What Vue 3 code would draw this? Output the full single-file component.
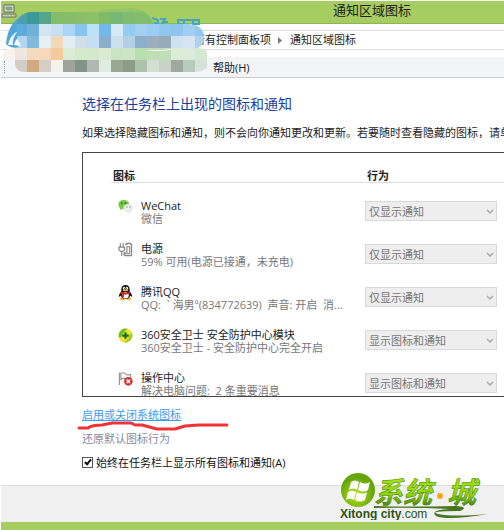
<template>
    <div class="window">
        <header class="top">
            <div class="title-bar">
                <svg class="window-icon" viewBox="0 0 16 16">
                    <path d="M3 1h10v7H3z" fill="#eef2e6" stroke="#59634b" />
                    <path d="M5 3h6v3H5z" fill="#8fa294" stroke="#7f9a8c" />
                    <path d="M1 10h14v3H1z" fill="#d6dccb" stroke="#69725c" />
                    <path d="M4 10v2M7 10v2M10 10v2M13 10v2" stroke="#8b937f" />
                </svg>
                <h1>通知区域图标</h1>
            </div>
            <nav class="address">
                <a href="#">所有控制面板项</a>
                <svg class="crumb" viewBox="0 0 5 7"><path d="M0 0l4 3.5L0 7z" fill="#777" /></svg>
                <a href="#">通知区域图标</a>
            </nav>
            <div class="menu-bar">
                <span class="grip"></span>
                <button type="button" class="menu-item">帮助(H)</button>
            </div>
            <svg class="mosaic" viewBox="0 0 214 76" aria-hidden="true">
                <defs>
                    <clipPath id="blob">
                        <path d="M17 24Q20 12 32 12H99Q105 8 128 9Q150 10 152 24H190Q204 26 204 37Q204 45 198 48Q210 49 210 60Q209 72 194 72H24Q15 72 14 60Q3 60 3 54Q3 48 15 48L21 46Q15 36 17 24z" />
                    </clipPath>
                </defs>
                <path d="M6 44Q8 18 31 12L50 14L24 38Q18 43 19 48Q9 48 6 44z" fill="#4fa6d7" />
                <path d="M8 45Q10 35 18 31Q12 38 13 45zM14 45Q15 39 20 37V46z" fill="#f2f9fd" />
                <path d="M152 18l6 2v3h-4M160 19h5l-2 3h5M162 24l4-3M178 25v-5h21v5M184 20v4h-6M193 20v4h7" fill="none" stroke="#43a8bd" stroke-width="2" />
                <path d="M112 12Q118 8 132 8Q148 9 154 22L150 24H110z" fill="#93c56b" />
                <g clip-path="url(#blob)">
                    <template v-for="(row, y) in mosaic" :key="y">
                        <rect
                            v-for="(color, x) in row"
                            :key="x"
                            :x="3 + x * 12"
                            :y="y * 12"
                            width="12"
                            height="12"
                            :fill="color"
                            shape-rendering="crispEdges"
                        />
                    </template>
                </g>
                <path d="M145 50Q158 51 172 49L170 50Q156 52 145 50z" fill="#fff" />
            </svg>
        </header>

        <main class="content">
            <h2>选择在任务栏上出现的图标和通知</h2>
            <p class="hint">如果选择隐藏图标和通知，则不会向你通知更改和更新。若要随时查看隐藏的图标，请单击</p>

            <div class="list">
                <table>
                    <thead>
                        <tr>
                            <th>图标</th>
                            <th class="behavior">行为</th>
                        </tr>
                    </thead>
                    <tbody>
                        <tr v-for="item in items" :key="item.id">
                            <td>
                                <div class="entry">
                                    <svg v-if="item.id === 'wechat'" class="icon" viewBox="0 0 16 16">
                                        <path d="M6 1C2.500 1 .5 3.200 .5 6c0 1.700.9 3 2 4L2 12l2.500-1.300C9 11.500 12 9 12 6S9.500 1 6 1z" fill="#75cb43" />
                                        <circle cx="4" cy="4.500" r="1" fill="#32741b" />
                                        <circle cx="8" cy="4.500" r="1" fill="#32741b" />
                                        <path d="M11 5.500c-3 0-5 1.800-5 4s2 4 5 4l2 .8v-1.300c1.400-.7 2.300-2 2.300-3.500 0-2.200-2-4-4.300-4z" fill="#eee" stroke="#d6d6d6" stroke-width=".6" />
                                        <circle cx="9.500" cy="8.500" r=".8" fill="#888" />
                                        <circle cx="12.700" cy="8.500" r=".8" fill="#888" />
                                    </svg>
                                    <svg v-else-if="item.id === 'power'" class="icon" viewBox="0 0 16 16" fill="none" stroke="#858585" stroke-width="1.200">
                                        <path d="M2.500 1v4M5.500 1v4M1 5.500h6v3L5 10H3L1 8.500zM4 10v5" />
                                        <path d="M6.500 14.500V11M7.500 2.500h2v-1h4v1h1v12h-7v-4M9.500 5v7.500h3V5z" />
                                    </svg>
                                    <svg v-else-if="item.id === 'qq'" class="icon" viewBox="0 0 16 16">
                                        <ellipse cx="5" cy="14.500" rx="3" ry="1.400" fill="#f4a51d" />
                                        <ellipse cx="11" cy="14.500" rx="3" ry="1.400" fill="#f4a51d" />
                                        <path d="M8 0C5 0 3.500 2 3.500 5v2C2 8.500.8 10.500 1 12.500c.8.300 1.500-.5 2-1.200C3.500 13.500 5.500 15 8 15s4.500-1.500 5-3.700c.5.700 1.200 1.500 2 1.200.2-2-1-4-2.500-5.500V5c0-3-1.500-5-4.500-5z" fill="#171717" />
                                        <ellipse cx="8" cy="11" rx="3.500" ry="3.300" fill="#fff" />
                                        <ellipse cx="6.500" cy="3.500" rx="1.200" ry="1.600" fill="#fff" />
                                        <ellipse cx="9.500" cy="3.500" rx="1.200" ry="1.600" fill="#fff" />
                                        <circle cx="7" cy="3.700" r=".5" />
                                        <circle cx="9" cy="3.700" r=".5" />
                                        <ellipse cx="8" cy="5.700" rx="3" ry="1" fill="#f7b51b" />
                                        <path d="M3 7Q8 9.500 13 7v2Q9.500 10.500 6.500 10v3H4.500V9.500L3 9z" fill="#e22028" />
                                    </svg>
                                    <svg v-else-if="item.id === 'safe'" class="icon" viewBox="0 0 16 16">
                                        <circle cx="8" cy="8" r="7.500" fill="#f6df2b" />
                                        <path d="M10 .8A7.500 7.500 0 0 0 1 10Q3 11 4 8T10 .8z" fill="#68bd2c" />
                                        <path d="M6 15.200A7.500 7.500 0 0 0 15 6Q13 5 12 9T6 15.200z" fill="#9ccc25" />
                                        <path d="M8 4.500v7M4.500 8h7" stroke="#087527" stroke-width="2.400" />
                                    </svg>
                                    <svg v-else class="icon" viewBox="0 0 16 16">
                                        <path d="M1.500 15V1.500M3 2.500Q6 1 8 3t5.500.5V9Q9 10 7.500 8.500T3 9V2" fill="#f8f8f8" stroke="#959595" stroke-width="1.200" />
                                        <circle cx="11" cy="11" r="4.600" fill="#db3032" />
                                        <path d="M9.200 9.200l3.600 3.600M12.800 9.200l-3.600 3.600" stroke="#fff" stroke-width="1.600" />
                                    </svg>
                                    <label :for="item.id">
                                        <span class="name">{{ item.name }}</span>
                                        <span class="desc">{{ item.desc }}</span>
                                    </label>
                                </div>
                            </td>
                            <td>
                                <div class="picker">
                                    <select :id="item.id" v-model="item.mode" disabled>
                                        <option v-for="mode in modes" :key="mode">{{ mode }}</option>
                                    </select>
                                    <svg class="arrow" viewBox="0 0 8 6"><path d="M1 1l3 3 3-3" fill="none" stroke="#aaa" stroke-width="1.500" /></svg>
                                </div>
                            </td>
                        </tr>
                    </tbody>
                </table>
            </div>

            <div class="links">
                <a href="#" class="system-link">启用或关闭系统图标</a>
                <svg class="scribble" viewBox="0 0 154 12">
                    <path d="M2 7H11Q15 4 25 4L35 2H54L58 4H65L80 8H98L108 5L122 4H150" fill="none" stroke="#ef3438" stroke-width="3" stroke-linecap="round" stroke-linejoin="round" />
                </svg>
                <a href="#" class="restore-link">还原默认图标行为</a>
            </div>
            <label class="always">
                <input v-model="showAll" type="checkbox" />
                <span>始终在任务栏上显示所有图标和通知(A)</span>
            </label>
        </main>

        <footer class="bottom">
            <svg class="brand" viewBox="0 0 152 48">
                <defs>
                    <radialGradient id="orb" cx="45%" cy="65%">
                        <stop offset="0" stop-color="#b9e51c" />
                        <stop offset="1" stop-color="#65a70b" />
                    </radialGradient>
                    <linearGradient id="leaf" x1="0" y1="0" x2="0" y2="1">
                        <stop offset="0" stop-color="#a9ec08" />
                        <stop offset=".6" stop-color="#8fd60a" />
                        <stop offset="1" stop-color="#285f12" />
                    </linearGradient>
                </defs>
                <circle cx="19" cy="18" r="17" fill="url(#orb)" />
                <path d="M12 10Q16 7 20 10L18 18Q14 15 10 18zM21 10Q26 13 31 10L29 18Q24 21 19 18zM9 20Q13 17 17 20L15 28Q11 25 7 28zM18 20Q23 23 28 20L26 28Q21 31 16 28z" fill="#fff" />
                <text class="brand-name" x="35" y="31">系统</text>
                <circle cx="101" cy="24" r="3" fill="#f9a514" />
                <text class="brand-name" x="108" y="31">城</text>
                <path d="M35 34Q70 35 116 34Q131 35 121 39Q88 39 99 42Q115 45 149 42Q109 49 97 44Q90 38 111 37Q75 35 35 36z" fill="#47751e" />
                <text class="brand-site" x="1" y="46">Xitong city<tspan class="brand-com">.com</tspan></text>
            </svg>
        </footer>
    </div>
</template>

<script setup>
import { ref, reactive } from 'vue';

const showAll = ref(true);
const modes = ['仅显示通知', '显示图标和通知'];

const items = reactive([
    { id: 'wechat', name: 'WeChat', desc: '微信', mode: modes[0] },
    { id: 'power', name: '电源', desc: '59% 可用(电源已接通，未充电)', mode: modes[0] },
    { id: 'qq', name: '腾讯QQ', desc: 'QQ:  ` 海男º(834772639)  声音: 开启  消...', mode: modes[0] },
    { id: 'safe', name: '360安全卫士 安全防护中心模块', desc: '360安全卫士 - 安全防护中心完全开启', mode: modes[1] },
    { id: 'action', name: '操作中心', desc: '解决电脑问题:  2 条重要消息', mode: modes[1] },
]);

// tiles of the pixelated patch, top to bottom
const mosaic = [
    Array(17).fill('#93c56b'),
    ['#499fc9', '#4ba0ac', '#3d9997', '#54a58c', '#83bd69', '#86bd69', '#8abe68', '#8ac169', '#80bb69', '#79b774', '#80bc6f', '#83be6e', '#83bd70', '#a3cc6c', '#a3cc6c', '#a3cc6c', '#a3cc6c'],
    ['#4ca5d5', '#5eacd9', '#70b1d9', '#d4e5f1', '#c5dff3', '#aad5f6', '#86c4f2', '#bddff7', '#72b8ea', '#d4eaf7', '#94cbf3', '#a4cfef', '#9bccf3', '#90c7f1', '#8fc4ef', '#a1cff4', '#94c9ef'],
    ['#4ca5d5', '#b0d5ed', '#82b9dd', '#e6eff3', '#f3d8b8', '#e4edf2', '#d0deea', '#c3def5', '#8aaecb', '#cbdfed', '#b4cfe4', '#8dafc9', '#9aaebd', '#97abba', '#cee2f0', '#d4e5f1', '#b1d0ea'],
    ['#f8f1ec', '#ece6df', '#f5dac0', '#f6d8bc', '#f5cb9e', '#dbedd4', '#d4eacb', '#d4e9cb', '#d9ecd3', '#cae3c2', '#cbe5c6', '#b9dfb0', '#bfdeb6', '#c0dfb9', '#dcecd9', '#dbebd9', '#d5e9d2'],
    ['#f0f0f0', '#d1cec9', '#d2aa7e', '#d4cec7', '#f4f2ed', '#9ea49c', '#849287', '#b1b8b1', '#e0ebe1', '#96a991', '#8d9e88', '#aec1aa', '#d4ded3', '#c8d2c7', '#a0a9a0', '#b6cbb9', '#d8e1d9'],
];
</script>

<style>
body {
    background: #fff;
}
</style>

<style scoped>
.window {
    box-sizing: border-box;
    height: 100vh;
    padding: 1px 0 0 1px;
    display: flex;
    flex-direction: column;
    overflow: hidden;
    background: #fff;
    color: #222;
    font: 11px/13px "Open Sans", "Noto Sans CJK SC", sans-serif;
}

.top {
    position: relative;
    flex: none;
}

.title-bar {
    display: flex;
    align-items: flex-start;
    height: 22px;
    background: #a5cd61;
    border-bottom: 1px solid #8fb452;
}

.window-icon {
    width: 16px;
    height: 16px;
    margin-top: 3px;
}

h1 {
    margin: 0 0 0 316px;
    font-size: 13px;
    line-height: 19px;
    font-weight: 400;
    white-space: nowrap;
}

.address {
    display: flex;
    align-items: center;
    height: 18px;
    margin-top: 6px;
    padding-left: 193px;
    border-top: 1px solid #ddd;
    border-bottom: 1px solid #ddd;
    line-height: 18px;
    white-space: nowrap;
}

.address a {
    color: #222;
    text-decoration: none;
}

.crumb {
    width: 5px;
    height: 7px;
    margin: 0 7px;
}

.menu-bar {
    display: flex;
    align-items: center;
    height: 20px;
    margin-top: 7px;
    background: #f3f4f6;
    border-bottom: 1px solid #ccc;
}

.grip {
    width: 2px;
    margin-left: 3px;
    height: 12px;
    border-left: 1px dotted #999;
}

.menu-item {
    margin-left: 206px;
    padding: 0;
    border: 0;
    background: none;
    color: #222;
    font: inherit;
}

/* sits over the title, address and menu rows */
.mosaic {
    position: absolute;
    left: -1px;
    top: -1px;
    width: 214px;
    height: 76px;
}

.content {
    flex: 1;
    min-height: 0;
    display: flex;
    flex-direction: column;
    padding: 17px 0 16px 81px;
}

h2 {
    margin: 0;
    color: #1a419f;
    font-size: 14px;
    line-height: 18px;
    font-weight: 400;
    white-space: nowrap;
}

.hint {
    margin: 13px 0;
    white-space: nowrap;
    overflow: hidden;
}

.list {
    flex: 1;
    min-height: 0;
    overflow: hidden;
    padding: 16px 0 0 28px;
    border: 1px solid #444;
    border-right: 0;
}

table {
    width: 100%;
    table-layout: fixed;
    border-collapse: collapse;
}

th {
    padding: 0 2px;
    border-bottom: 1px solid #ddd;
    font-weight: 700;
    text-align: left;
}

.behavior {
    width: 135px;
}

td {
    height: 27px;
    padding: 16px 0 0;
    vertical-align: top;
}

.entry {
    display: flex;
    gap: 8px;
    padding-left: 7px;
    white-space: pre;
}

.icon {
    flex: none;
    width: 15px;
    height: 15px;
}

.name,
.desc {
    display: block;
}

.desc {
    color: #777;
}

.picker {
    position: relative;
    height: 20px;
    margin: 2px 7px 0 0;
}

select {
    appearance: none;
    display: block;
    box-sizing: border-box;
    width: 100%;
    height: 20px;
    padding: 0 3px;
    border: 1px solid #d9d9d9;
    border-radius: 0;
    background: #eee;
    color: #777;
    opacity: 1;
    font: inherit;
}

.arrow {
    position: absolute;
    right: 3px;
    top: 8px;
    width: 8px;
    height: 6px;
    pointer-events: none;
}

.links {
    position: relative;
    display: flex;
    flex-direction: column;
    align-items: flex-start;
    gap: 11px;
    margin-top: 11px;
}

.system-link {
    color: #3b9bef;
}

.restore-link {
    color: #858a9c;
    text-decoration: none;
}

.scribble {
    position: absolute;
    left: -5px;
    top: 13px;
    width: 154px;
    height: 12px;
}

.always {
    display: flex;
    align-items: center;
    gap: 3px;
    margin-top: 11px;
    color: #111;
}

.always input {
    appearance: none;
    position: relative;
    width: 11px;
    height: 11px;
    margin: 0;
    border: 1px solid #555;
    background: #fff;
}

.always input:checked::after {
    content: "";
    position: absolute;
    left: 3px;
    top: 0;
    width: 2px;
    height: 5px;
    border: solid #111;
    border-width: 0 2px 2px 0;
    transform: rotate(40deg);
}

.bottom {
    position: relative;
    flex: none;
    height: 36px;
    background: #f0f0f0;
    border-top: 1px solid #ddd;
    border-bottom: 8px solid #a5cd61;
}

/* watermark over the footer corner */
.brand {
    position: absolute;
    right: 13px;
    bottom: 2px;
    width: 152px;
    height: 48px;
}

.brand-name {
    fill: url(#leaf);
    stroke: #477c10;
    stroke-width: 0.5px;
    font: italic 700 29px "Noto Sans CJK SC", sans-serif;
}

.brand-site {
    fill: #2d5317;
    font: 700 12px "Liberation Sans", sans-serif;
}

.brand-com {
    font-weight: 400;
}
</style>
